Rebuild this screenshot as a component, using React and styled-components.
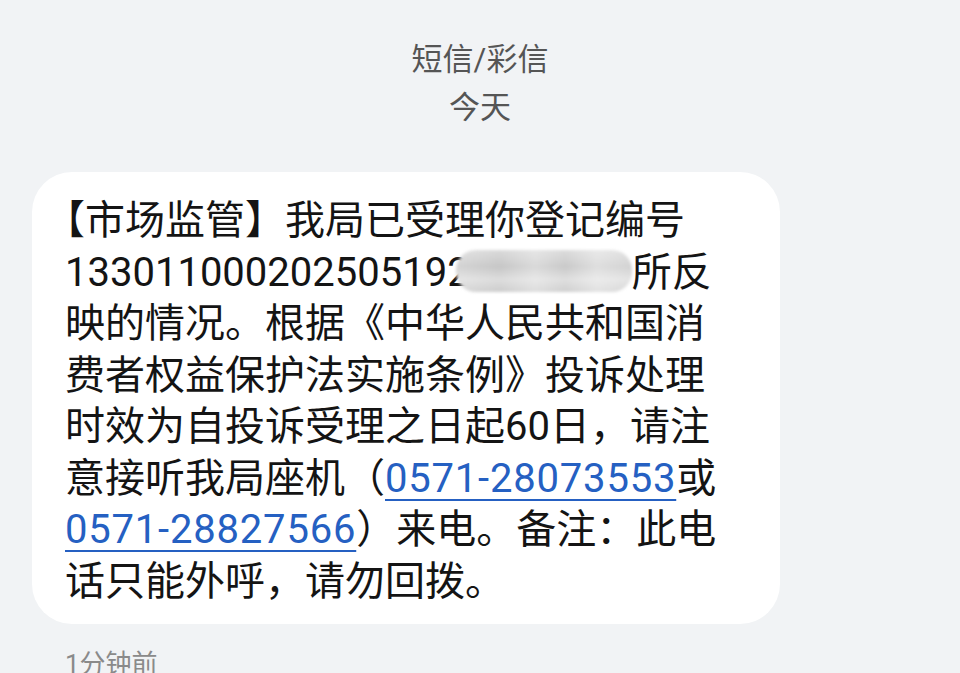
import React from 'react';
import styled, { createGlobalStyle } from 'styled-components';

const GlobalStyle = createGlobalStyle`
  html, body {
    margin: 0;
    padding: 0;
    background: #f1f3f5;
    overflow: hidden;
  }
  body {
    font-family: Roboto, "Noto Sans CJK SC", sans-serif;
  }
`;

const Screen = styled.div`
  width: 960px;
  height: 673px;
  overflow: hidden;
  background: #f1f3f5;
  padding-top: 36px;
  box-sizing: border-box;
`;

const Header = styled.div`
  display: flex;
  flex-direction: column;
  align-items: center;
  color: #555555;
  font-size: 31px;
  line-height: 48px;
`;

const Bubble = styled.div`
  margin: 40px 0 0 32px;
  width: 748px;
  box-sizing: border-box;
  background: #ffffff;
  border-radius: 40px;
  padding: 23px 20px 17px 33px;
  color: #141414;
  font-size: 40px;
  line-height: 51.5px;
`;

const Line = styled.div`
  white-space: nowrap;
`;

// half-width opening bracket, as the phone font draws it
const Bracket = styled.span`
  font-feature-settings: "halt" 1;
`;

const Phone = styled.span`
  color: #2560c2;
  letter-spacing: 0.8px;
  text-decoration: underline;
  text-decoration-color: #2560c2;
  text-decoration-thickness: 2px;
  text-underline-offset: 7px;
`;

const Redacted = styled.span`
  display: inline-block;
  width: 176px;
  height: 42px;
  margin-left: -14px;
  vertical-align: -6px;
  border-radius: 20px;
  background:
    linear-gradient(180deg, rgba(255, 255, 255, 0.35) 0%, rgba(255, 255, 255, 0) 40%, rgba(255, 255, 255, 0.4) 70%, rgba(255, 255, 255, 0.1) 100%),
    linear-gradient(90deg, #d4d4d4 0%, #c6c6c6 25%, #d9d9d9 45%, #c9c9c9 62%, #dedede 80%, #d2d2d2 100%);
  filter: blur(1.5px);
`;

const Time = styled.div`
  margin: 22px 0 0 65px;
  color: #8a8a8a;
  font-size: 26px;
  line-height: 36px;
`;

export default function App() {
  return (
    <Screen>
      <GlobalStyle />
      <Header>
        <div>短信/彩信</div>
        <div>今天</div>
      </Header>
      <Bubble>
        <Line>
          <Bracket>【</Bracket>市场监管】我局已受理你登记编号
        </Line>
        <Line>
          133011000202505192<Redacted />所反
        </Line>
        <Line>映的情况。根据《中华人民共和国消</Line>
        <Line>费者权益保护法实施条例》投诉处理</Line>
        <Line>时效为自投诉受理之日起60日，请注</Line>
        <Line>
          意接听我局座机（<Phone>0571-28073553</Phone>或
        </Line>
        <Line>
          <Phone>0571-28827566</Phone>）来电。备注：此电
        </Line>
        <Line>话只能外呼，请勿回拨。</Line>
      </Bubble>
      <Time>1分钟前</Time>
    </Screen>
  );
}
